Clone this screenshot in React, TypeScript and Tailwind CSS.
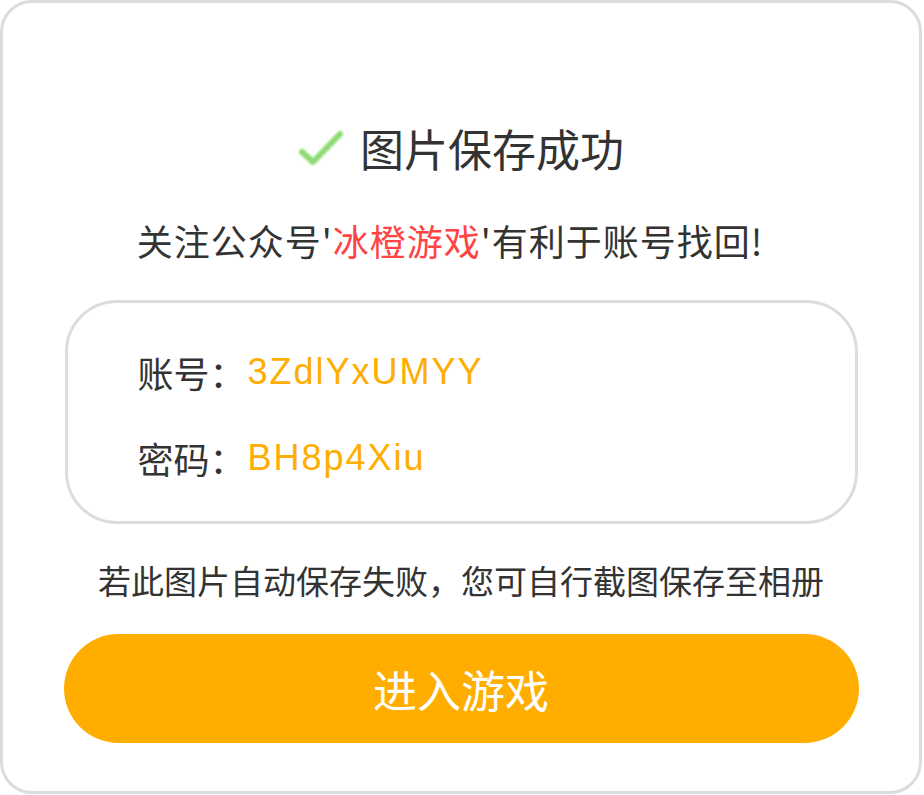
import React from 'react';

const cjk = "font-['PingFang_SC','Noto_Sans_CJK_SC',sans-serif]";
const latin = "font-['Liberation_Sans','Noto_Sans_CJK_SC',sans-serif]";

const CheckIcon: React.FC = () => (
  <svg width="46" height="38" viewBox="0 0 46 38" className="blur-[0.9px]">
    <polyline
      points="4,23 15,33 42,5"
      fill="none"
      stroke="#8ddb72"
      strokeWidth={6}
      strokeLinecap="round"
      strokeLinejoin="round"
    />
  </svg>
);

const App: React.FC = () => {
  return (
    <div className="w-[924px] h-[795px] bg-white">
      <div className={`w-[922px] h-[794px] border-[3px] border-[#dcdcdc] rounded-[32px] bg-white flex flex-col items-center pt-[121px] ${cjk}`}>
        <div className="flex items-center gap-[16px]">
          <CheckIcon />
          <span className="text-[44px] leading-[48px] text-[#333]">图片保存成功</span>
        </div>

        <p className="mt-[48px] pr-[22px] text-[36px] leading-[40px] tracking-[1px] text-[#333]">
          关注公众号'<span className="text-[#ff4444]">冰橙游戏</span>'有利于账号找回!
        </p>

        <div className="mt-[40px] w-[793px] h-[224px] border-[3px] border-[#dcdcdc] rounded-[52px] pl-[70px] pt-[47px] flex flex-col gap-[42px]">
          <div className="flex items-center text-[36px] leading-[44px]">
            <span className="text-[#333]">账号：</span>
            <span className={`ml-[2px] text-[#ffad00] tracking-[2px] ${latin}`}>3ZdlYxUMYY</span>
          </div>
          <div className="flex items-center text-[36px] leading-[44px]">
            <span className="text-[#333]">密码：</span>
            <span className={`ml-[2px] text-[#ffad00] tracking-[2px] ${latin}`}>BH8p4Xiu</span>
          </div>
        </div>

        <p className="mt-[36px] text-[33px] leading-[40px] text-[#333]">
          若此图片自动保存失败，您可自行截图保存至相册
        </p>

        <button className="mt-[34px] w-[795px] h-[109px] rounded-full bg-[#ffae00] text-white text-[44px] leading-[48px]">
          进入游戏
        </button>
      </div>
    </div>
  );
};

export default App;
